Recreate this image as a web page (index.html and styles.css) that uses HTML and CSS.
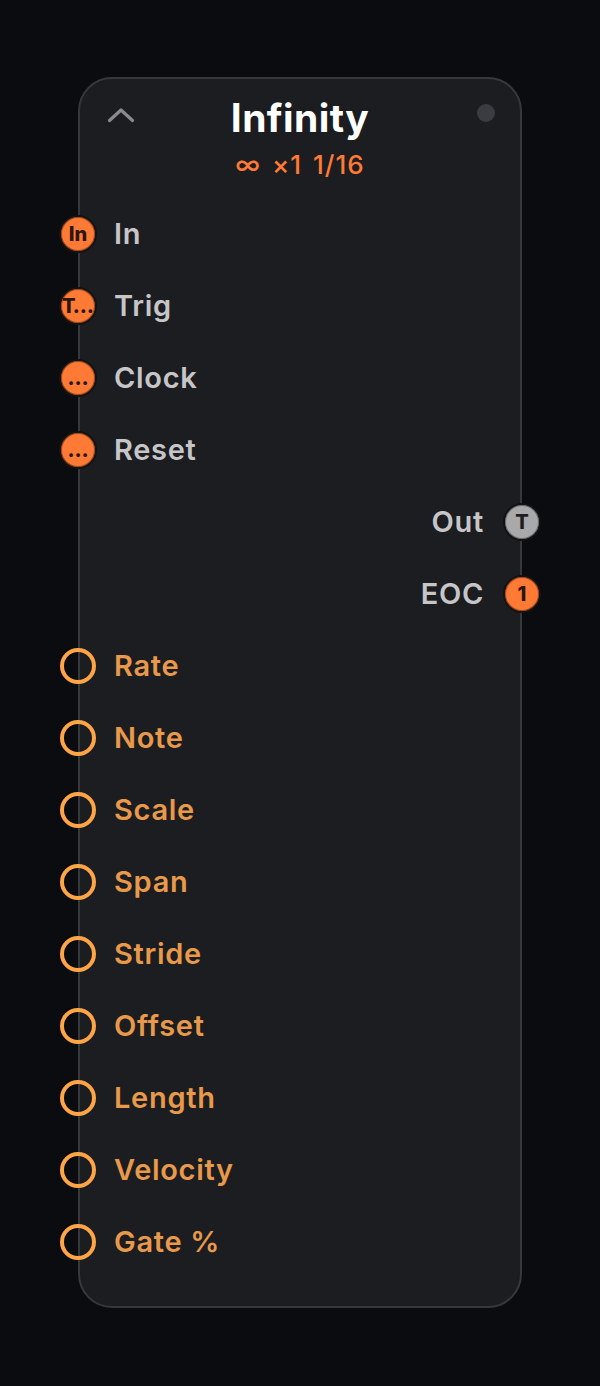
FILE: index.html
```html
<!DOCTYPE html>
<html>
<head>
<meta charset="utf-8">
<link rel="stylesheet" href="styles.css">
</head>
<body>
<div class="card">
  <div class="header">
    <svg class="chev" width="28" height="16" viewBox="0 0 28 16"><path d="M2.5 13.5 L14 3 L25.5 13.5" fill="none" stroke="#8b8b8e" stroke-width="3.2" stroke-linecap="round" stroke-linejoin="round"/></svg>
    <div class="title">Infinity</div>
    <div class="dot"></div>
    <div class="sub">∞ ×1 1/16</div>
  </div>
  <div class="row"><span class="port fill">In</span><span class="lbl">In</span></div>
  <div class="row"><span class="port fill clip">T…</span><span class="lbl">Trig</span></div>
  <div class="row"><span class="port fill">…</span><span class="lbl">Clock</span></div>
  <div class="row"><span class="port fill">…</span><span class="lbl">Reset</span></div>
  <div class="row out"><span class="lbl">Out</span><span class="port gray">T</span></div>
  <div class="row out"><span class="lbl">EOC</span><span class="port fill">1</span></div>
  <div class="row"><span class="port ring"></span><span class="lbl param">Rate</span></div>
  <div class="row"><span class="port ring"></span><span class="lbl param">Note</span></div>
  <div class="row"><span class="port ring"></span><span class="lbl param">Scale</span></div>
  <div class="row"><span class="port ring"></span><span class="lbl param">Span</span></div>
  <div class="row"><span class="port ring"></span><span class="lbl param">Stride</span></div>
  <div class="row"><span class="port ring"></span><span class="lbl param">Offset</span></div>
  <div class="row"><span class="port ring"></span><span class="lbl param">Length</span></div>
  <div class="row"><span class="port ring"></span><span class="lbl param">Velocity</span></div>
  <div class="row"><span class="port ring"></span><span class="lbl param">Gate %</span></div>
</div>
</body>
</html>
```
FILE: styles.css
```css
* { box-sizing: border-box; }
html, body { margin: 0; padding: 0; }
body {
  background: #0b0c0f;
  width: 600px;
  height: 1386px;
  font-family: Inter, "Noto Sans", sans-serif;
  padding-top: 77px;
}
.card {
  margin-left: 78px;
  width: 444px;
  height: 1231px;
  background: #1c1d21;
  border: 2px solid #37383c;
  border-radius: 34px;
  padding-bottom: 28px;
}
.header {
  display: grid;
  grid-template-columns: 1fr auto 1fr;
  align-items: center;
  padding-top: 16px;
  padding-bottom: 18px;
  height: 119px;
}
.chev { justify-self: start; margin-left: 27px; margin-top: -6px; }
.title {
  color: #ffffff;
  font-size: 39px;
  font-weight: 700;
  line-height: 46px;
  letter-spacing: 0.4px;
  text-align: center;
}
.dot {
  justify-self: end;
  margin-right: 25px;
  width: 18px;
  height: 18px;
  border-radius: 50%;
  background: #3b3c41;
  margin-top: -10px;
}
.sub {
  grid-column: 1 / 4;
  text-align: center;
  color: #ff7a35;
  font-size: 26px;
  font-weight: 500;
  line-height: 30px;
  letter-spacing: 1px;
  word-spacing: 3px;
  margin-top: 9px;
}
.row {
  display: flex;
  align-items: center;
  height: 72px;
}
.row.out { justify-content: flex-end; }
.port {
  flex: none;
  width: 38px;
  height: 38px;
  border-radius: 50%;
  margin-left: -21px;
  margin-right: 17px;
  display: flex;
  align-items: center;
  justify-content: center;
  font-size: 20px;
  font-weight: 800;
  color: #2b160b;
  overflow: hidden;
  white-space: nowrap;
}
.out .port { margin-left: 19px; margin-right: -21px; }
.port.fill {
  background: #ff7a35;
  border: 2px solid #151210;
  box-shadow: inset 0 0 0 1px #a8491c;
}
.port.clip { justify-content: flex-start; padding-left: 1px; letter-spacing: -1px; }
.port.gray {
  background: #a9a9ab;
  border: 2px solid #121214;
  box-shadow: inset 0 0 0 1px #6e6e70;
  color: #1e1e20;
}
.port.ring {
  width: 36px;
  height: 36px;
  margin-left: -20px;
  margin-right: 18px;
  border: 4px solid #ffa545;
  background: transparent;
}
.lbl {
  color: #c6c6c8;
  font-size: 29px;
  font-weight: 600;
  line-height: 36px;
  letter-spacing: 0.7px;
}
.lbl.param { color: #e8994a; }
```
